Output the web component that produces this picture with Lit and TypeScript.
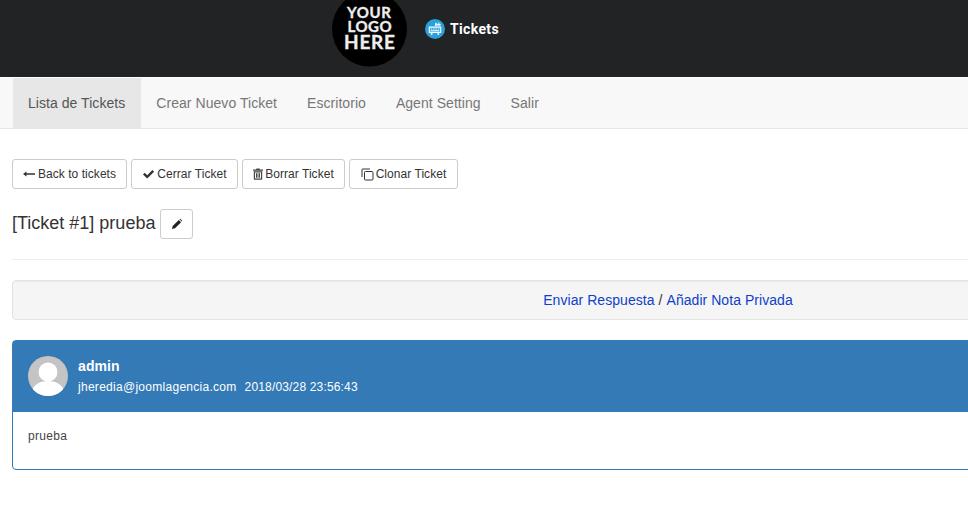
import { LitElement, html, css } from "lit";
import { customElement } from "lit/decorators.js";

@customElement("app-root")
export class AppRoot extends LitElement {
  static styles = css`
    :host { display: block; width: 968px; height: 511px; overflow: hidden; background: #fff; font-family: "Liberation Sans", Arial, sans-serif; color: #333; }
    .page { width: 1336px; }
    .header { height: 77px; background: #222324; display: flex; padding-left: 331px; overflow: hidden; box-sizing: border-box; }
    .logo { flex: none; width: 77px; height: 77px; margin-top: -9px; display: block; }
    .logo text { font-family: Lato, sans-serif; font-weight: 700; fill: #eee; stroke: #eee; stroke-width: .35px; text-anchor: middle; }
    .brand { display: flex; align-items: center; gap: 4px; margin-left: 17px; height: 58px; color: #fff; font-family: Roboto, sans-serif; font-weight: 700; font-size: 14px; letter-spacing: 0.35px; }
    .brand svg { width: 20px; height: 20px; display: block; margin-right: 1px; }
    .nav { height: 51px; box-sizing: border-box; margin-top: 1px; background: #f8f8f8; border-bottom: 1px solid #e7e7e7; display: flex; padding-left: 13px; font-size: 14px; letter-spacing: .05px; }
    .nav a { padding: 15px; line-height: 20px; color: #777; }
    .nav a.active { background: #e7e7e7; color: #555; padding-right: 16px; }
    .content { padding: 30px 12px 0; }
    .actions { display: flex; gap: 4px; }
    .btn { box-sizing: border-box; height: 30px; display: inline-flex; align-items: center; justify-content: center; gap: 2px; border: 1px solid #ccc; border-radius: 3px; background: #fff; font-size: 12px; letter-spacing: .05px; color: #333; }
    .btn svg { flex: none; display: block; }
    .back { width: 115px; gap: 3px; }
    .close { width: 107px; }
    .del { width: 103px; }
    .clone { width: 109px; }
    .title { display: flex; align-items: center; gap: 5px; margin-top: 20px; height: 30px; font-size: 18px; }
    .title span { padding-bottom: 2px; }
    .title .btn { width: 33px; }
    hr { border: 0; border-top: 1px solid #eee; margin: 20px 0; }
    .well { box-sizing: border-box; height: 40px; background: #f5f5f5; border: 1px solid #e3e3e3; border-radius: 4px; box-shadow: inset 0 1px 1px rgba(0,0,0,.05); display: flex; align-items: center; justify-content: center; gap: 4px; font-size: 14px; letter-spacing: .05px; color: #333; }
    .well a { color: #0e3fc9; }
    .panel { margin-top: 20px; height: 130px; box-sizing: border-box; border: 1px solid #337ab7; border-radius: 4px; }
    .phead { height: 71px; background: #337ab7; color: #fff; display: flex; align-items: center; gap: 10px; padding: 0 15px 2px; box-sizing: border-box; }
    .avatar { width: 40px; height: 40px; display: block; flex: none; }
    .name { font-size: 14px; font-weight: 700; line-height: 20px; letter-spacing: .1px; }
    .meta { font-size: 12px; line-height: 20px; display: flex; gap: 8px; margin-top: 1px; margin-bottom: -1px; }
    .email { letter-spacing: .28px; }
    .date { letter-spacing: .16px; }
    .pbody { padding: 16px 15px; font-size: 12px; line-height: 17px; color: #444; letter-spacing: .3px; }
  `;

  render() {
    return html`<div class="page">
      <div class="header">
        <svg class="logo" viewBox="0 0 77 77">
          <circle cx="38.500" cy="38" r="37.500" fill="#000"/>
          <text x="38" y="26.500" font-size="15" textLength="44">YOUR</text>
          <text x="38.500" y="41" font-size="15" textLength="44">LOGO</text>
          <text x="38.500" y="58" font-size="19" textLength="51">HERE</text>
        </svg>
        <div class="brand">
          <svg viewBox="0 0 21 21">
            <circle cx="10.500" cy="10.500" r="10.500" fill="#27a0dc"/>
            <path d="M4.500 8.500h12v5.500h-12z" fill="none" stroke="#fff" stroke-width="1.200"/>
            <path d="M6 10.500h1.500M8.500 10.500H10M11 10.500h1.500M13.500 10.500H15M6 12.300h9" stroke="#fff" stroke-width="1"/>
            <path d="M11 4.500h1v2.500h-1zM13 5.500h3v1h-3zM14.500 3.500v2" stroke="#fff" stroke-width=".8" fill="#fff"/>
            <circle cx="7" cy="15.800" r="1" fill="#fff"/><circle cx="14" cy="15.800" r="1" fill="#fff"/>
          </svg>
          <span>Tickets</span>
        </div>
      </div>
      <div class="nav">
        <a class="active">Lista de Tickets</a><a>Crear Nuevo Ticket</a><a>Escritorio</a><a>Agent Setting</a><a>Salir</a>
      </div>
      <div class="content">
        <div class="actions">
          <div class="btn back">
            <svg width="12" height="12" viewBox="0 0 12 12"><path d="M0 6l3.500-2.400V5.200H12v1.600H3.500v1.600z" fill="#333"/></svg><span>Back to tickets</span>
          </div>
          <div class="btn close">
            <svg width="13" height="12" viewBox="0 0 12 12"><path d="M.5 6.500l1.700-1.700 2.500 2.500L9.900 2l1.700 1.700-6.900 6.900z" fill="#333"/></svg><span>Cerrar Ticket</span>
          </div>
          <div class="btn del">
            <svg width="10" height="12" viewBox="0 0 10 12"><path d="M3.500.5h3l.5 1h3v1.200H0V1.500h3zM.8 3.300h8.400V11a.7.7 0 0 1-.7.7h-7A.7.7 0 0 1 .8 11zM2 4.500v6h6v-6zM3 5.300h1v4.500H3zM4.500 5.300h1v4.500h-1zM6 5.300h1v4.500H6z" fill="#444" fill-rule="evenodd"/></svg><span>Borrar Ticket</span>
          </div>
          <div class="btn clone">
            <svg width="13" height="13" viewBox="0 0 13 13"><path d="M1 9V1.500A.5.500 0 0 1 1.500 1H9" fill="none" stroke="#333"/><rect x="3.500" y="3.500" width="8.500" height="8.500" rx="1" fill="none" stroke="#333"/></svg><span>Clonar Ticket</span>
          </div>
        </div>
        <div class="title">
          <span>[Ticket #1] prueba</span>
          <div class="btn"><svg width="12" height="12" viewBox="0 0 12 12"><path d="M1 11l.7-3L7.800 1.900 10.100 4.200 4 10.300zM8.500 1.200l.7-.5 2.100 2.100-.5.700z" fill="#222"/></svg></div>
        </div>
        <hr />
        <div class="well"><a>Enviar Respuesta</a><span>/</span><a>Añadir Nota Privada</a></div>
        <div class="panel">
          <div class="phead">
            <svg class="avatar" viewBox="0 0 40 40">
              <defs><clipPath id="c"><circle cx="20" cy="20" r="20"/></clipPath></defs>
              <circle cx="20" cy="20" r="20" fill="#c4c4c4"/>
              <g clip-path="url(#c)" fill="#fff">
                <circle cx="20" cy="16" r="9.500"/>
                <ellipse cx="20" cy="36" rx="16" ry="11"/>
              </g>
            </svg>
            <div>
              <div class="name">admin</div>
              <div class="meta"><span class="email">jheredia@joomlagencia.com</span><span class="date">2018/03/28 23:56:43</span></div>
            </div>
          </div>
          <div class="pbody">prueba</div>
        </div>
      </div>
    </div>`;
  }
}
